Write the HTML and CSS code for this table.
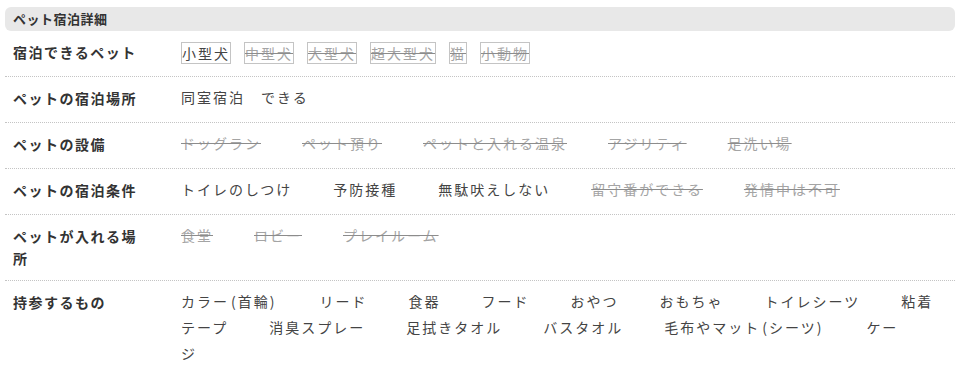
FILE: index.html
```html
<!DOCTYPE html>
<html lang="ja">
<head>
<meta charset="utf-8">
<title>ペット宿泊詳細</title>
<link rel="stylesheet" href="styles.css">
</head>
<body>
<section class="pet-detail">
  <h2 class="pet-detail__title">ペット宿泊詳細</h2>

  <div class="row">
    <div class="row__label">宿泊できるペット</div>
    <div class="row__value">
      <span class="tag">小型犬</span><span class="tag tag--off">中型犬</span><span class="tag tag--off">大型犬</span><span class="tag tag--off">超大型犬</span><span class="tag tag--off">猫</span><span class="tag tag--off">小動物</span>
    </div>
  </div>

  <div class="row">
    <div class="row__label">ペットの宿泊場所</div>
    <div class="row__value"><span class="item">同室宿泊　できる</span></div>
  </div>

  <div class="row">
    <div class="row__label">ペットの設備</div>
    <div class="row__value"><span class="item item--off">ドッグラン</span><span class="item item--off">ペット預り</span><span class="item item--off">ペットと入れる温泉</span><span class="item item--off">アジリティ</span><span class="item item--off">足洗い場</span></div>
  </div>

  <div class="row">
    <div class="row__label">ペットの宿泊条件</div>
    <div class="row__value"><span class="item">トイレのしつけ</span><span class="item">予防接種</span><span class="item">無駄吠えしない</span><span class="item item--off">留守番ができる</span><span class="item item--off">発情中は不可</span></div>
  </div>

  <div class="row">
    <div class="row__label">ペットが入れる場所</div>
    <div class="row__value"><span class="item item--off">食堂</span><span class="item item--off">ロビー</span><span class="item item--off">プレイルーム</span></div>
  </div>

  <div class="row row--last">
    <div class="row__label">持参するもの</div>
    <div class="row__value"><span class="item">カラー<span class="paren-open">(</span>首輪<span class="paren-close">)</span></span><span class="item">リード</span><span class="item">食器</span><span class="item">フード</span><span class="item">おやつ</span><span class="item">おもちゃ</span><span class="item">トイレシーツ</span><span class="item item--head">粘着</span><span class="item">テープ</span><span class="item">消臭スプレー</span><span class="item">足拭きタオル</span><span class="item">バスタオル</span><span class="item">毛布やマット<span class="paren-open">(</span>シーツ<span class="paren-close">)</span></span><span class="item item--head">ケー</span><span class="item">ジ</span></div>
  </div>
</section>
</body>
</html>
```

FILE: styles.css
```css
html, body {
  margin: 0;
  padding: 0;
  background: #ffffff;
}

body {
  font-family: "Noto Sans CJK JP", "Noto Sans", sans-serif;
  color: #444444;
}

.pet-detail {
  margin: 7px 19px 0 5px;
}

.pet-detail__title {
  margin: 0;
  height: 24px;
  line-height: 24px;
  padding-left: 8px;
  background: #e8e8e8;
  border-radius: 6px;
  font-size: 13px;
  font-weight: 700;
  letter-spacing: 0.5px;
  color: #333333;
}

.row {
  display: grid;
  grid-template-columns: 176px 1fr;
  align-items: start;
  border-bottom: 1px dotted #c4c4c4;
}

.row--last {
  border-bottom: none;
}

.row__label {
  padding: 10px 38px 11px 8px;
  font-size: 14px;
  line-height: 22px;
  font-weight: 700;
  letter-spacing: 1.5px;
  color: #333333;
}

.row__value {
  padding: 7px 15px 12px 0;
  font-size: 14px;
  line-height: 26px;
  letter-spacing: 2px;
  color: #444444;
}

.item {
  margin-right: 41px;
}

.item--head {
  margin-right: 0;
}

.paren-open {
  padding-left: 2px;
}

.paren-close {
  letter-spacing: 4px;
}

.item--off {
  color: #a4a4a4;
  text-decoration: line-through;
  text-decoration-color: #8c8c8c;
}

.tag {
  display: inline-block;
  vertical-align: middle;
  margin-right: 13px;
  border: 1px solid #c4c4c4;
  line-height: 20px;
  color: #444444;
}

.tag--off {
  color: #a4a4a4;
  text-decoration: line-through;
  text-decoration-color: #8c8c8c;
}
```
